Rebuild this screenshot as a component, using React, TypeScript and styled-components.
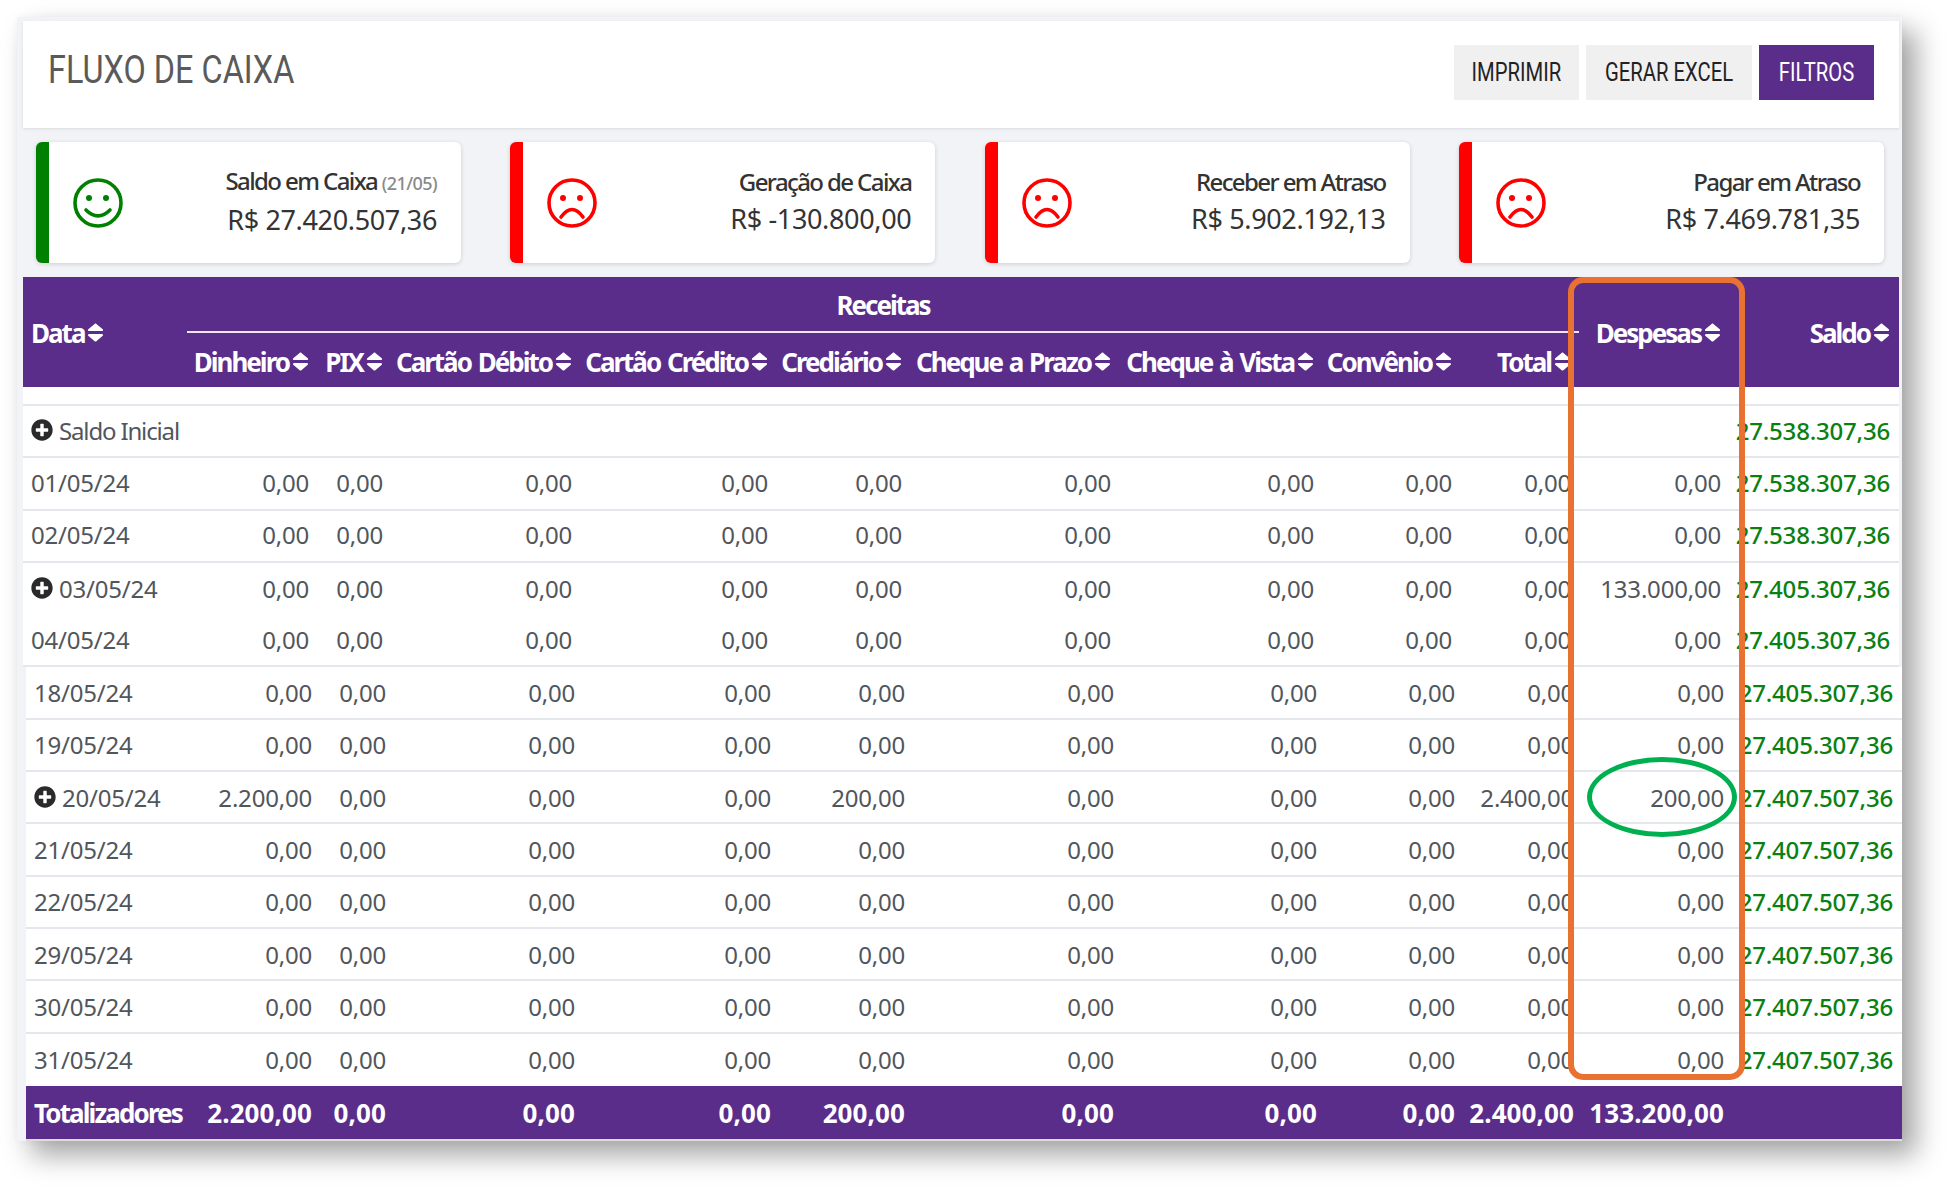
import React from "react";
import styled, { createGlobalStyle } from "styled-components";
import { FaSort, FaPlusCircle } from "react-icons/fa";

const GlobalStyle = createGlobalStyle`
  html, body {
    margin: 0;
    background: #ffffff;
    font-family: "Noto Sans", "Open Sans", sans-serif;
  }
  * {
    box-sizing: border-box;
  }
`;

const PURPLE = "#5b2d8b";
const COLUMNS = "164px 130px 74px 189px 196px 134px 209px 203px 138px 119px 150px 169px";

const Page = styled.div`
  width: 1951px;
  height: 1190px;
  padding: 17px 0 0 17px;
  overflow: hidden;
`;

const Frame = styled.div`
  position: relative;
  width: 1885px;
  height: 1124px;
  padding: 4px 3px 0 6px;
  background: #f1f3f7;
  box-shadow: 14px 14px 26px rgba(0, 0, 0, 0.36), 0 0 8px rgba(0, 0, 0, 0.04);
`;

const TitleBar = styled.header`
  height: 107px;
  padding: 0 25px 4px 25px;
  display: flex;
  align-items: center;
  justify-content: space-between;
  background: #ffffff;
  box-shadow: 0 1px 3px rgba(0, 0, 0, 0.1);
`;

const Title = styled.h1`
  margin: 0 0 6px;
  font-family: Roboto, sans-serif;
  font-size: 38px;
  font-weight: 400;
  color: #5a5a5a;
  transform: scaleX(0.853);
  transform-origin: left center;
`;

const Actions = styled.div`
  display: flex;
  gap: 7px;
`;

const ActionButton = styled.button<{ $primary?: boolean; $width: number }>`
  width: ${(p) => p.$width}px;
  height: 55px;
  padding: 0;
  border: 0;
  display: flex;
  align-items: center;
  justify-content: center;
  font-family: Roboto, sans-serif;
  font-size: 25px;
  color: ${(p) => (p.$primary ? "#ffffff" : "#222222")};
  background: ${(p) => (p.$primary ? PURPLE : "#f0f0f0")};
`;

const ButtonLabel = styled.span`
  flex: none;
  transform: scaleX(0.81);
`;

const Cards = styled.section`
  margin: 14px 0;
  padding: 0 15px 0 13px;
  display: grid;
  grid-template-columns: repeat(4, 425px);
  justify-content: space-between;
`;

const Card = styled.article<{ $tone: string }>`
  height: 121px;
  padding: 0 24px 0 24px;
  display: flex;
  align-items: center;
  justify-content: space-between;
  background: #ffffff;
  border-left: 13px solid ${(p) => p.$tone};
  border-radius: 6px;
  box-shadow: 0 1px 4px rgba(0, 0, 0, 0.16);
`;

const CardText = styled.div`
  text-align: right;
  color: #333333;
  margin-top: -3px;
`;

const CardLabel = styled.div`
  font-size: 24px;
  line-height: 36px;
  letter-spacing: -1.6px;
  font-weight: 500;
`;

const CardDate = styled.span`
  font-size: 18px;
  letter-spacing: -0.6px;
  color: #8a8a8a;
`;

const CardValue = styled.div`
  font-size: 27px;
  line-height: 38px;
  letter-spacing: -0.35px;
`;

const TableHead = styled.div`
  display: grid;
  grid-template-columns: ${COLUMNS};
  grid-template-rows: 56px 54px;
  background: ${PURPLE};
  color: #ffffff;
  font-size: 26px;
  font-weight: 700;
  letter-spacing: -2px;
  word-spacing: 2px;
`;

const HeadCell = styled.div<{ $left?: boolean; $column: number; $tall?: boolean }>`
  grid-column: ${(p) => p.$column};
  grid-row: ${(p) => (p.$tall ? "1 / 3" : "2")};
  padding: ${(p) => (p.$tall ? "1px" : "3px")} 8px 0;
  display: flex;
  align-items: center;
  justify-content: ${(p) => (p.$left ? "flex-start" : "flex-end")};
  gap: 3px;
  white-space: nowrap;
`;

const GroupCell = styled.div`
  grid-column: 2 / 11;
  grid-row: 1;
  display: flex;
  align-items: center;
  justify-content: center;
  border-bottom: 2px solid #ece6f2;
  padding-top: 1px;
`;

const SortIcon = styled(FaSort)`
  flex: none;
  width: 17px;
  height: 23px;
`;

const Spacer = styled.div`
  height: 19px;
  background: #ffffff;
  border-bottom: 2px solid #e4e7ec;
`;

const Rows = styled.div<{ $shifted?: boolean }>`
  ${(p) => (p.$shifted ? "margin: 0 -3px 0 3px;" : "> * { padding-bottom: 2px; }")}
  background: #ffffff;
`;

const Row = styled.div`
  height: 52.3px;
  display: grid;
  grid-template-columns: ${COLUMNS};
  border-bottom: 2px solid #e4e7ec;
  color: #51565c;
  font-size: 24px;
  letter-spacing: -0.2px;
  &:nth-last-child(2) {
    border-bottom: 0;
  }
  &:last-child {
    border-bottom: 2px solid #e4e7ec;
  }
`;

const DateCell = styled.div`
  padding: 0 8px;
  display: flex;
  align-items: center;
  gap: 6px;
  white-space: nowrap;
`;

const OpeningLabel = styled.span`
  letter-spacing: -1.15px;
`;

const ExpandIcon = styled(FaPlusCircle)`
  flex: none;
  width: 22px;
  height: 22px;
  color: #2a2a2a;
`;

const ValueCell = styled.div`
  padding: 0 8px;
  display: flex;
  align-items: center;
  justify-content: flex-end;
  white-space: nowrap;
`;

const BalanceCell = styled(ValueCell)`
  color: #0a8012;
  font-weight: 500;
`;

const Footer = styled.div`
  height: 55px;
  padding-top: 1px;
  display: grid;
  grid-template-columns: ${COLUMNS};
  background: ${PURPLE};
  border-bottom: 2px solid #dcdcdc;
  color: #ffffff;
  font-size: 26px;
  font-weight: 700;
  letter-spacing: 0.1px;
`;

const FooterLabel = styled(DateCell)`
  letter-spacing: -1.9px;
`;

const OrangeMark = styled.div`
  position: absolute;
  left: 1551px;
  top: 260px;
  width: 177px;
  height: 803px;
  border: 6px solid #e97132;
  border-radius: 15px;
`;

const GreenMark = styled.div`
  position: absolute;
  left: 1570px;
  top: 740px;
  width: 150px;
  height: 80px;
  border: 5px solid #00b050;
  border-radius: 50%;
`;

const Face: React.FC<{ color: string; happy?: boolean }> = ({ color, happy }) => (
  <svg width="50" height="50" viewBox="0 0 50 50" fill="none" stroke={color} strokeWidth="3.6" strokeLinecap="round">
    <circle cx="25" cy="25" r="23" />
    <circle cx="16" cy="20" r="3" fill={color} stroke="none" />
    <circle cx="33" cy="20" r="3" fill={color} stroke="none" />
    {happy ? <path d="M13 32 Q25 44 37 32" /> : <path d="M14 39 Q25 24 36 39" />}
  </svg>
);

const Sortable: React.FC<{ label: string; left?: boolean; tall?: boolean; column: number }> = ({
  label,
  left,
  tall,
  column,
}) => (
  <HeadCell $left={left} $tall={tall} $column={column}>
    {label}
    <SortIcon preserveAspectRatio="none" />
  </HeadCell>
);

const receitas = [
  "Dinheiro",
  "PIX",
  "Cartão Débito",
  "Cartão Crédito",
  "Crediário",
  "Cheque a Prazo",
  "Cheque à Vista",
  "Convênio",
  "Total",
];

const cards = [
  { label: "Saldo em Caixa", date: "(21/05)", value: "R$ 27.420.507,36", happy: true },
  { label: "Geração de Caixa", value: "R$ -130.800,00" },
  { label: "Receber em Atraso", value: "R$ 5.902.192,13" },
  { label: "Pagar em Atraso", value: "R$ 7.469.781,35" },
];

interface Line {
  date: string;
  expand?: boolean;
  values?: Record<number, string>;
  saldo: string;
}

const topLines: Line[] = [
  { date: "01/05/24", saldo: "27.538.307,36" },
  { date: "02/05/24", saldo: "27.538.307,36" },
  { date: "03/05/24", expand: true, values: { 9: "133.000,00" }, saldo: "27.405.307,36" },
  { date: "04/05/24", saldo: "27.405.307,36" },
];

const bottomLines: Line[] = [
  { date: "18/05/24", saldo: "27.405.307,36" },
  { date: "19/05/24", saldo: "27.405.307,36" },
  {
    date: "20/05/24",
    expand: true,
    values: { 0: "2.200,00", 4: "200,00", 8: "2.400,00", 9: "200,00" },
    saldo: "27.407.507,36",
  },
  { date: "21/05/24", saldo: "27.407.507,36" },
  { date: "22/05/24", saldo: "27.407.507,36" },
  { date: "29/05/24", saldo: "27.407.507,36" },
  { date: "30/05/24", saldo: "27.407.507,36" },
  { date: "31/05/24", saldo: "27.407.507,36" },
];

const totals = ["2.200,00", "0,00", "0,00", "0,00", "200,00", "0,00", "0,00", "0,00", "2.400,00", "133.200,00"];

const DataRow: React.FC<{ line: Line }> = ({ line }) => (
  <Row>
    <DateCell>
      {line.expand && <ExpandIcon />}
      {line.date}
    </DateCell>
    {Array.from({ length: 10 }, (_, i) => (
      <ValueCell key={i}>{line.values?.[i] ?? "0,00"}</ValueCell>
    ))}
    <BalanceCell>{line.saldo}</BalanceCell>
  </Row>
);

const App: React.FC = () => {
  return (
    <Page>
      <GlobalStyle />
      <Frame>
        <TitleBar>
          <Title>FLUXO DE CAIXA</Title>
          <Actions>
            <ActionButton $width={125}>
              <ButtonLabel>IMPRIMIR</ButtonLabel>
            </ActionButton>
            <ActionButton $width={166}>
              <ButtonLabel>GERAR EXCEL</ButtonLabel>
            </ActionButton>
            <ActionButton $width={115} $primary>
              <ButtonLabel>FILTROS</ButtonLabel>
            </ActionButton>
          </Actions>
        </TitleBar>

        <Cards>
          {cards.map((card) => {
            const tone = card.happy ? "#008000" : "#ff0000";
            return (
              <Card key={card.label} $tone={tone}>
                <Face color={tone} happy={card.happy} />
                <CardText>
                  <CardLabel>
                    {card.label} {card.date && <CardDate>{card.date}</CardDate>}
                  </CardLabel>
                  <CardValue>{card.value}</CardValue>
                </CardText>
              </Card>
            );
          })}
        </Cards>

        <TableHead>
          <Sortable label="Data" left tall column={1} />
          <GroupCell>Receitas</GroupCell>
          <Sortable label="Despesas" tall column={11} />
          <Sortable label="Saldo" tall column={12} />
          {receitas.map((label, i) => (
            <Sortable key={label} label={label} column={i + 2} />
          ))}
        </TableHead>

        <Spacer />

        <Rows>
          <Row>
            <DateCell>
              <ExpandIcon />
              <OpeningLabel>Saldo Inicial</OpeningLabel>
            </DateCell>
            {Array.from({ length: 10 }, (_, i) => (
              <ValueCell key={i} />
            ))}
            <BalanceCell>27.538.307,36</BalanceCell>
          </Row>
          {topLines.map((line) => (
            <DataRow key={line.date} line={line} />
          ))}
        </Rows>

        <Rows $shifted>
          {bottomLines.map((line) => (
            <DataRow key={line.date} line={line} />
          ))}
          <Footer>
            <FooterLabel>Totalizadores</FooterLabel>
            {totals.map((total, i) => (
              <ValueCell key={i}>{total}</ValueCell>
            ))}
          </Footer>
        </Rows>

        <OrangeMark />
        <GreenMark />
      </Frame>
    </Page>
  );
};

export default App;
